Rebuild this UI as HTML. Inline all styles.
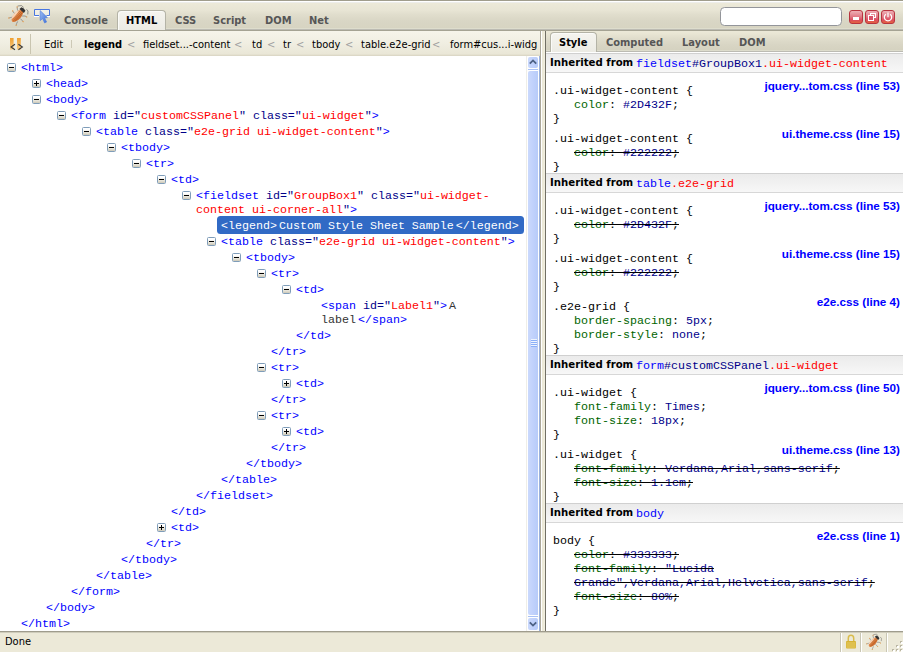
<!DOCTYPE html>
<html>
<head>
<meta charset="utf-8">
<title>Firebug</title>
<style>
html,body{margin:0;padding:0;}
body{width:903px;height:652px;overflow:hidden;position:relative;background:#fff;font-family:"DejaVu Sans Condensed","Liberation Sans",sans-serif;font-size:11px;color:#000;}
.abs{position:absolute;}
/* top toolbar */
#tb1{left:0;top:0;width:903px;height:31px;background:linear-gradient(#a09d8c 0,#a09d8c 1px,#fff 1px,#fff 2px,#ededea 2px,#ededea 3px,#ece9d8 3px,#e8e5d5 10px,#e0ddcc 15px,#d9d6c5 21px,#d7d4c2 28px,#deddcd 28px,#deddcd 29px,#bcbbb3 29px,#bcbbb3 30px,#a5a393 30px,#a5a393 31px);}
.tab{position:absolute;top:14px;height:14px;line-height:14px;font-weight:bold;font-size:11px;color:#565656;white-space:nowrap;}
#tabsel{left:117px;top:10px;width:49px;height:20px;border:1px solid #b4b3a6;border-bottom:none;border-radius:4px 4px 0 0;background:linear-gradient(#f5f4ef,#ecebe4);box-shadow:inset 1px 1px 0 #fbfbf8;box-sizing:border-box;}
.wb{position:absolute;top:10px;width:14px;height:14px;box-sizing:border-box;border:1px solid #b8343f;border-radius:3px;background:linear-gradient(#eeb0b6 0,#e27c88 45%,#dc4c5e 75%,#e3643e 100%);}
.wb i,.wb svg{margin:-1px 0 0 -1px}
/* second toolbar */
#tb2{left:0;top:31px;width:540px;height:25px;background:linear-gradient(#f6f4ea 0,#f0eee2 12px,#eae7d7 23px,#e0dccb 24px,#d8d4c2 25px);}
.crumb{position:absolute;top:38px;height:14px;line-height:14px;white-space:nowrap;font-size:11px;color:#000;}
.lt{position:absolute;top:38px;height:14px;line-height:14px;color:#a0a0a0;font-size:11px;}
/* splitter */
#split{left:540px;top:31px;width:6px;height:600px;background:linear-gradient(90deg,#aca899 0,#aca899 1px,#fff 1px,#fff 2px,#ece9d8 2px,#ece9d8 4px,#f1eede 4px,#f1eede 5px,#716f64 5px);}
/* side panel tab bar */
#tb3{left:546px;top:31px;width:357px;height:22px;background:linear-gradient(#ece9d8 0,#e8e5d3 3px,#dfdccb 8px,#d8d5c4 14px,#d5d2c0 19px,#dddccc 19px,#dddccc 20px,#bcbbb3 20px,#bcbbb3 21px,#a5a393 21px,#a5a393 22px);}
#stabsel{left:550px;top:32px;width:47px;height:20px;border:1px solid #b4b3a6;border-bottom:none;border-radius:4px 4px 0 0;background:linear-gradient(#f5f4ef,#ecebe4);box-shadow:inset 1px 1px 0 #fbfbf8;box-sizing:border-box;}
.stab{position:absolute;top:36px;height:14px;line-height:14px;font-weight:bold;font-size:11px;color:#565656;white-space:nowrap;}
/* status bar */
#status{left:0;top:631px;width:903px;height:21px;background:linear-gradient(#9f9c8d 0,#9f9c8d 1px,#cfccbb 1px,#cfccbb 2px,#ece9d8 2px);}
.sep{position:absolute;top:2px;width:1px;height:19px;background:#c9c6b4;box-shadow:1px 0 0 #fff;}
/* html panel */
#html{left:0;top:56px;width:527px;height:575px;background:#fff;font-family:"Liberation Mono",monospace;font-size:11.67px;}
.n{position:absolute;margin-top:1px;height:14px;line-height:14px;white-space:pre;color:#000088;font-family:"Liberation Mono",monospace;font-size:11.67px;}
.t{color:#0000ff;}
.v{color:#ff0000;}
.x{color:#333;}
.tw{position:absolute;width:9px;height:9px;box-sizing:border-box;border:1px solid #7f9db9;border-radius:1.5px;background:linear-gradient(#fff 20%,#e4e1d5 70%,#cbc7b8);}
.tw:before{content:"";position:absolute;left:1px;top:3px;width:5px;height:1px;background:#000;}
.tw.p:after{content:"";position:absolute;left:3px;top:1px;width:1px;height:5px;background:#000;}
#sel{left:217px;top:216px;width:307px;height:18px;background:#316ac5;border-radius:3.5px;}
/* scrollbar */
#sb{left:527px;top:56px;width:13px;height:575px;background:#fdfdfb;}
.sbb{width:10px;background:linear-gradient(90deg,#cad9fc,#c3d3fc 40%,#b7cbf9);border-radius:2px;box-shadow:0 0 0 1px #fff;}
/* css panel */
#css{left:546px;top:52px;width:357px;height:579px;background:#fff;}
.hd{position:absolute;left:546px;width:357px;height:20px;box-sizing:border-box;border-top:1px solid #d0d0d0;border-bottom:1px solid #d7d7d7;background:linear-gradient(#ebebeb,#f7f7f7);}
.hd b{position:absolute;left:4px;top:2px;height:14px;line-height:14px;font-size:11.3px;font-weight:bold;color:#000;white-space:nowrap;}
.hd span.m{position:absolute;top:3px;height:14px;line-height:14px;font-family:"Liberation Mono",monospace;font-size:11.67px;white-space:pre;color:#000088;}
.c{position:absolute;height:14px;line-height:14px;white-space:pre;font-family:"Liberation Mono",monospace;font-size:11.67px;color:#000;}
.pn{color:#006400;}
.pv{color:#00008b;}
.o{text-decoration:line-through;text-decoration-color:#000;}
.src{position:absolute;right:3px;height:14px;line-height:14px;white-space:nowrap;font-family:"Liberation Sans",sans-serif;font-size:11.7px;font-weight:bold;color:#0000ff;}
</style>
</head>
<body>
<div id="tb1" class="abs"></div>
<div id="tabsel" class="abs"></div>
<div class="tab" style="left:64px">Console</div>
<div class="tab" style="left:126px;color:#000">HTML</div>
<div class="tab" style="left:175px">CSS</div>
<div class="tab" style="left:213px">Script</div>
<div class="tab" style="left:265px">DOM</div>
<div class="tab" style="left:309px">Net</div>

<div id="tb2" class="abs"></div>
<div class="crumb" style="left:44px">Edit</div>
<div class="crumb" style="left:84px;font-weight:bold">legend</div>
<div class="lt" style="left:127px">&lt;</div>
<div class="crumb" style="left:143px">fieldset...-content</div>
<div class="lt" style="left:234px">&lt;</div>
<div class="crumb" style="left:252px">td</div>
<div class="lt" style="left:267px">&lt;</div>
<div class="crumb" style="left:283px">tr</div>
<div class="lt" style="left:296px">&lt;</div>
<div class="crumb" style="left:312px">tbody</div>
<div class="lt" style="left:345px">&lt;</div>
<div class="crumb" style="left:361px">table.e2e-grid</div>
<div class="lt" style="left:432px">&lt;</div>
<div class="crumb" style="left:450px">form#cus...i-widg</div>


<!--ICONS-->
<svg class="abs" style="left:8px;top:4px" width="22" height="22" viewBox="0 0 22 22">
<defs><linearGradient id="bg1" x1="0" y1="0" x2="0" y2="1"><stop offset="0" stop-color="#f7c8a4"/><stop offset="0.45" stop-color="#e68a48"/><stop offset="1" stop-color="#c8662a"/></linearGradient></defs>
<g fill="none" stroke="#8c8c8c" stroke-width="0.9" stroke-linecap="round">
<path d="M10.5 7.5 L9.3 5.2 L9.2 3"/><path d="M7.5 10 L5.5 8.6 L4.8 7"/><path d="M5.5 13 L2.8 13.5 L1 14"/>
<path d="M14.5 12 L17 12 L18.6 12.8"/><path d="M12.8 15 L14 16.6 L15 17.4"/><path d="M9.5 17.8 L8.6 19.6 L8.2 21.2"/>
<path d="M15.4 3.2 L13.5 1.6 L10 2" stroke="#555" stroke-width="0.6"/><path d="M18.8 5.6 L20 7 L19.8 10" stroke="#555" stroke-width="0.6"/>
</g>
<g fill="#efa654"><circle cx="9.2" cy="2.9" r="0.7"/><circle cx="4.7" cy="6.9" r="0.7"/><circle cx="0.9" cy="14" r="0.7"/><circle cx="18.7" cy="12.9" r="0.7"/><circle cx="15.1" cy="17.5" r="0.7"/><circle cx="8.2" cy="21.3" r="0.7"/></g>
<g transform="rotate(-48 10 11)">
<ellipse cx="9" cy="11" rx="7.8" ry="3.7" fill="url(#bg1)"/>
<path d="M2.8 9.8 L14.8 9.8 M2.2 11.2 L15.4 11.2 M3 12.6 L14.8 12.6" stroke="#8f3d10" stroke-width="0.6" opacity="0.6"/>
<ellipse cx="8" cy="8.6" rx="5" ry="0.8" fill="#fde0c8" opacity="0.75"/>
<path d="M15.4 8 L18.2 8.4 Q19.2 11 18.2 13.6 L15.4 14 Z" fill="#333"/>
</g>
</svg>
<svg class="abs" style="left:33px;top:8px" width="19" height="17" viewBox="0 0 19 17">
<defs><linearGradient id="ar" x1="0" y1="0" x2="1" y2="1"><stop offset="0" stop-color="#9dbcf3"/><stop offset="1" stop-color="#3d6fd6"/></linearGradient></defs>
<path d="M1.5 7.5 L1.5 1.5 L16.5 1.5 L16.5 7.5" fill="#fff" fill-opacity="0.45" stroke="none"/>
<path d="M6 7.5 L1.5 7.5 L1.5 1.5 L16.5 1.5 L16.5 7.5 L13.5 7.5" fill="none" stroke="#4876e0" stroke-width="1"/>
<path d="M1 8.5 L6 8.5 M13.5 8.5 L17 8.5" stroke="#fff" stroke-width="1"/>
<path d="M7.2 2.6 L7.2 12.6 L9.6 10.6 L11.6 15 L13.6 14 L11.6 10 L14.4 9.6 Z" fill="url(#ar)" stroke="#4a7be0" stroke-width="0.6"/>
</svg>
<!-- search box -->
<div class="abs" style="left:720px;top:7px;width:122px;height:19px;box-sizing:border-box;border:1px solid #93959a;border-radius:4.5px;background:#fff"></div>
<!-- window buttons -->
<div class="wb" style="left:849px"><i class="abs" style="left:4px;top:7px;width:6px;height:2.5px;background:#fff"></i></div>
<div class="wb" style="left:865px"><i class="abs" style="left:5px;top:3px;width:6px;height:5px;box-sizing:border-box;border:1px solid #fff"></i><i class="abs" style="left:3px;top:5px;width:6px;height:6px;box-sizing:border-box;border:1px solid #fff;background:#d9546a"></i></div>
<div class="wb" style="left:881px"><svg class="abs" style="left:0;top:0" width="14" height="14" viewBox="0 0 14 14"><path d="M4.9 4.2 A3.7 3.7 0 1 0 9.1 4.2" fill="none" stroke="#fff" stroke-width="1.2"/><path d="M7 2.6 L7 7.2" stroke="#fff" stroke-width="1.2"/></svg></div>
<!-- toolbar2 icon -->
<svg class="abs" style="left:9px;top:37px" width="16" height="15" viewBox="0 0 16 15">
<defs><linearGradient id="pz" x1="0" y1="0" x2="0" y2="1"><stop offset="0" stop-color="#f0a030"/><stop offset="1" stop-color="#f8cb86"/></linearGradient></defs>
<rect x="1" y="1" width="3.6" height="11.6" fill="url(#pz)"/><rect x="8" y="1" width="3.8" height="11.6" fill="url(#pz)"/>
<path d="M6 7.2 L2 10 L6 12.8" fill="none" stroke="#3a3a3a" stroke-width="1.1"/><path d="M9.4 7.2 L13.4 10 L9.4 12.8" fill="none" stroke="#3a3a3a" stroke-width="1.1"/>
</svg>
<div class="abs" style="left:30px;top:34px;width:1px;height:20px;background:#c9c5b0"></div>
<div class="abs" style="left:71px;top:40px;width:1px;height:8px;background:#cdc9b6"></div>
<!--/ICONS-->
<div id="split" class="abs"></div>
<div id="tb3" class="abs"></div>
<div id="stabsel" class="abs"></div>
<div class="stab" style="left:559px;color:#000">Style</div>
<div class="stab" style="left:606px">Computed</div>
<div class="stab" style="left:682px">Layout</div>
<div class="stab" style="left:739px">DOM</div>

<div id="html" class="abs"></div>
<!--TREE-->
<i class="tw" style="left:7px;top:63px"></i>
<div class="n" style="left:21px;top:60px"><span class="t">&lt;html</span><span class="t">&gt;</span></div>
<i class="tw p" style="left:32px;top:79px"></i>
<div class="n" style="left:46px;top:76px"><span class="t">&lt;head</span><span class="t">&gt;</span></div>
<i class="tw" style="left:32px;top:95px"></i>
<div class="n" style="left:46px;top:92px"><span class="t">&lt;body</span><span class="t">&gt;</span></div>
<i class="tw" style="left:57px;top:111px"></i>
<div class="n" style="left:71px;top:108px"><span class="t">&lt;form</span> id=&quot;<span class="v">customCSSPanel</span>&quot; class=&quot;<span class="v">ui-widget</span>&quot;<span class="t">&gt;</span></div>
<i class="tw" style="left:82px;top:127px"></i>
<div class="n" style="left:96px;top:124px"><span class="t">&lt;table</span> class=&quot;<span class="v">e2e-grid ui-widget-content</span>&quot;<span class="t">&gt;</span></div>
<i class="tw" style="left:107px;top:143px"></i>
<div class="n" style="left:121px;top:140px"><span class="t">&lt;tbody</span><span class="t">&gt;</span></div>
<i class="tw" style="left:132px;top:159px"></i>
<div class="n" style="left:146px;top:156px"><span class="t">&lt;tr</span><span class="t">&gt;</span></div>
<i class="tw" style="left:157px;top:175px"></i>
<div class="n" style="left:171px;top:172px"><span class="t">&lt;td</span><span class="t">&gt;</span></div>
<i class="tw" style="left:182px;top:191px"></i>
<div class="n" style="left:196px;top:188px"><span class="t">&lt;fieldset</span> id=&quot;<span class="v">GroupBox1</span>&quot; class=&quot;<span class="v">ui-widget-</span></div>
<div class="n" style="left:196px;top:202px"><span class="v">content ui-corner-all</span>&quot;<span class="t">&gt;</span></div>
<div id="sel" class="abs"></div>
<div class="n" style="left:221px;top:218px;color:#fff">&lt;legend&gt;<span style="margin:0 2px">Custom Style Sheet Sample</span>&lt;/legend&gt;</div>
<i class="tw" style="left:207px;top:237px"></i>
<div class="n" style="left:221px;top:234px"><span class="t">&lt;table</span> class=&quot;<span class="v">e2e-grid ui-widget-content</span>&quot;<span class="t">&gt;</span></div>
<i class="tw" style="left:232px;top:253px"></i>
<div class="n" style="left:246px;top:250px"><span class="t">&lt;tbody</span><span class="t">&gt;</span></div>
<i class="tw" style="left:257px;top:269px"></i>
<div class="n" style="left:271px;top:266px"><span class="t">&lt;tr</span><span class="t">&gt;</span></div>
<i class="tw" style="left:282px;top:285px"></i>
<div class="n" style="left:296px;top:282px"><span class="t">&lt;td</span><span class="t">&gt;</span></div>
<div class="n" style="left:321px;top:298px"><span class="t">&lt;span</span> id=&quot;<span class="v">Label1</span>&quot;<span class="t">&gt;</span><span class="x" style="margin-left:2px">A</span></div>
<div class="n" style="left:321px;top:312px"><span class="x" style="margin-right:2px">label</span><span class="t">&lt;/span&gt;</span></div>
<div class="n" style="left:296px;top:328px"><span class="t">&lt;/td</span><span class="t">&gt;</span></div>
<div class="n" style="left:271px;top:344px"><span class="t">&lt;/tr</span><span class="t">&gt;</span></div>
<i class="tw" style="left:257px;top:363px"></i>
<div class="n" style="left:271px;top:360px"><span class="t">&lt;tr</span><span class="t">&gt;</span></div>
<i class="tw p" style="left:282px;top:379px"></i>
<div class="n" style="left:296px;top:376px"><span class="t">&lt;td</span><span class="t">&gt;</span></div>
<div class="n" style="left:271px;top:392px"><span class="t">&lt;/tr</span><span class="t">&gt;</span></div>
<i class="tw" style="left:257px;top:411px"></i>
<div class="n" style="left:271px;top:408px"><span class="t">&lt;tr</span><span class="t">&gt;</span></div>
<i class="tw p" style="left:282px;top:427px"></i>
<div class="n" style="left:296px;top:424px"><span class="t">&lt;td</span><span class="t">&gt;</span></div>
<div class="n" style="left:271px;top:440px"><span class="t">&lt;/tr</span><span class="t">&gt;</span></div>
<div class="n" style="left:246px;top:456px"><span class="t">&lt;/tbody</span><span class="t">&gt;</span></div>
<div class="n" style="left:221px;top:472px"><span class="t">&lt;/table</span><span class="t">&gt;</span></div>
<div class="n" style="left:196px;top:488px"><span class="t">&lt;/fieldset</span><span class="t">&gt;</span></div>
<div class="n" style="left:171px;top:504px"><span class="t">&lt;/td</span><span class="t">&gt;</span></div>
<i class="tw p" style="left:157px;top:523px"></i>
<div class="n" style="left:171px;top:520px"><span class="t">&lt;td</span><span class="t">&gt;</span></div>
<div class="n" style="left:146px;top:536px"><span class="t">&lt;/tr</span><span class="t">&gt;</span></div>
<div class="n" style="left:121px;top:552px"><span class="t">&lt;/tbody</span><span class="t">&gt;</span></div>
<div class="n" style="left:96px;top:568px"><span class="t">&lt;/table</span><span class="t">&gt;</span></div>
<div class="n" style="left:71px;top:584px"><span class="t">&lt;/form</span><span class="t">&gt;</span></div>
<div class="n" style="left:46px;top:600px"><span class="t">&lt;/body</span><span class="t">&gt;</span></div>
<div class="n" style="left:21px;top:616px"><span class="t">&lt;/html</span><span class="t">&gt;</span></div>
<!--/TREE-->
<div class="abs" style="left:526px;top:56px;width:1px;height:575px;background:#efeee8"></div>
<div id="sb" class="abs">
<div class="abs sbb" style="left:1px;top:1px;height:11px"><svg class="abs" style="left:1px;top:2px" width="8" height="6" viewBox="0 0 8 6"><path d="M0.8 4.6 L4 1.4 L7.2 4.6" fill="none" stroke="#4d6185" stroke-width="1.8"/></svg></div>
<div class="abs" style="left:1px;top:13px;width:10px;height:1px;background:#a9c1f5"></div>
<div class="abs sbb" style="left:1px;top:15px;height:544px;border-radius:2px 0 0 2px"></div>
<div class="abs" style="left:4px;top:283px;width:6px;height:1px;background:#eef4fe;box-shadow:0 1px 0 #8cb0f8,0 2px 0 #eef4fe,0 3px 0 #8cb0f8,0 4px 0 #eef4fe,0 5px 0 #8cb0f8,0 6px 0 #eef4fe,0 7px 0 #8cb0f8"></div>
<div class="abs" style="left:1px;top:560px;width:10px;height:1px;background:#a9c1f5"></div>
<div class="abs sbb" style="left:1px;top:562px;height:12px"><svg class="abs" style="left:1px;top:3px" width="8" height="6" viewBox="0 0 8 6"><path d="M0.8 1.4 L4 4.6 L7.2 1.4" fill="none" stroke="#4d6185" stroke-width="1.8"/></svg></div>
<div class="abs" style="left:12px;top:0;width:1px;height:575px;background:#9bb2de"></div>
</div>
<div id="css" class="abs"></div>
<!--CSS-->
<div class="hd" style="top:53px"><b>Inherited from</b><span class="m" style="left:90px"><span class="t">fieldset</span>#GroupBox1<span class="v">.ui-widget-content</span></span></div>
<div class="src" style="top:79px">jquery...tom.css (line 53)</div>
<div class="c" style="left:553px;top:84px">.ui-widget-content {</div>
<div class="c" style="left:574px;top:98px"><span class="pn">color</span>: <span class="pv">#2D432F</span>;</div>
<div class="c" style="left:553px;top:112px">}</div>
<div class="src" style="top:127px">ui.theme.css (line 15)</div>
<div class="c" style="left:553px;top:132px">.ui-widget-content {</div>
<div class="c o" style="left:574px;top:146px"><span class="pn">color</span>: <span class="pv">#222222</span>;</div>
<div class="c" style="left:553px;top:160px">}</div>
<div class="hd" style="top:173px"><b>Inherited from</b><span class="m" style="left:90px"><span class="t">table</span><span class="v">.e2e-grid</span></span></div>
<div class="src" style="top:199px">jquery...tom.css (line 53)</div>
<div class="c" style="left:553px;top:204px">.ui-widget-content {</div>
<div class="c o" style="left:574px;top:218px"><span class="pn">color</span>: <span class="pv">#2D432F</span>;</div>
<div class="c" style="left:553px;top:232px">}</div>
<div class="src" style="top:247px">ui.theme.css (line 15)</div>
<div class="c" style="left:553px;top:252px">.ui-widget-content {</div>
<div class="c o" style="left:574px;top:266px"><span class="pn">color</span>: <span class="pv">#222222</span>;</div>
<div class="c" style="left:553px;top:280px">}</div>
<div class="src" style="top:295px">e2e.css (line 4)</div>
<div class="c" style="left:553px;top:300px">.e2e-grid {</div>
<div class="c" style="left:574px;top:314px"><span class="pn">border-spacing</span>: <span class="pv">5px</span>;</div>
<div class="c" style="left:574px;top:328px"><span class="pn">border-style</span>: <span class="pv">none</span>;</div>
<div class="c" style="left:553px;top:342px">}</div>
<div class="hd" style="top:355px"><b>Inherited from</b><span class="m" style="left:90px"><span class="t">form</span>#customCSSPanel<span class="v">.ui-widget</span></span></div>
<div class="src" style="top:381px">jquery...tom.css (line 50)</div>
<div class="c" style="left:553px;top:386px">.ui-widget {</div>
<div class="c" style="left:574px;top:400px"><span class="pn">font-family</span>: <span class="pv">Times</span>;</div>
<div class="c" style="left:574px;top:414px"><span class="pn">font-size</span>: <span class="pv">18px</span>;</div>
<div class="c" style="left:553px;top:428px">}</div>
<div class="src" style="top:443px">ui.theme.css (line 13)</div>
<div class="c" style="left:553px;top:448px">.ui-widget {</div>
<div class="c o" style="left:574px;top:462px"><span class="pn">font-family</span>: <span class="pv">Verdana,Arial,sans-serif</span>;</div>
<div class="c o" style="left:574px;top:476px"><span class="pn">font-size</span>: <span class="pv">1.1em</span>;</div>
<div class="c" style="left:553px;top:490px">}</div>
<div class="hd" style="top:503px"><b>Inherited from</b><span class="m" style="left:90px"><span class="t">body</span></span></div>
<div class="src" style="top:529px">e2e.css (line 1)</div>
<div class="c" style="left:553px;top:534px">body {</div>
<div class="c o" style="left:574px;top:548px"><span class="pn">color</span>: <span class="pv">#333333</span>;</div>
<div class="c o" style="left:574px;top:562px"><span class="pn">font-family</span>: <span class="pv">&quot;Lucida</span></div>
<div class="c o" style="left:574px;top:576px"><span class="pv">Grande&quot;,Verdana,Arial,Helvetica,sans-serif</span>;</div>
<div class="c o" style="left:574px;top:590px"><span class="pn">font-size</span>: <span class="pv">80%</span>;</div>
<div class="c" style="left:553px;top:604px">}</div>
<!--/CSS-->

<div id="status" class="abs"><span class="abs" style="left:5px;top:4px;line-height:14px">Done</span>
<i class="sep" style="left:840px"></i><i class="sep" style="left:860px"></i><i class="sep" style="left:886px"></i>
<svg class="abs" style="left:845px;top:3px" width="12" height="16" viewBox="0 0 12 16">
<path d="M3.3 7.5 L3.3 4.2 A2.7 2.9 0 0 1 8.7 4.2 L8.7 7.5" fill="none" stroke="#d9bc4c" stroke-width="1.5"/>
<rect x="1" y="7" width="10" height="7.6" rx="1" fill="#d6b233"/>
<path d="M1.5 9 L10.5 9 M1.5 11 L10.5 11 M1.5 13 L10.5 13" stroke="#ecd676" stroke-width="0.8"/>
</svg>
<svg class="abs" style="left:890px;top:9px" width="14" height="14" viewBox="0 0 14 14"><g fill="#b9b5a3"><rect x="10" y="1" width="2" height="2"/><rect x="6" y="5" width="2" height="2"/><rect x="10" y="5" width="2" height="2"/><rect x="2" y="9" width="2" height="2"/><rect x="6" y="9" width="2" height="2"/><rect x="10" y="9" width="2" height="2"/></g><g fill="#fff"><rect x="11" y="2" width="2" height="2"/><rect x="7" y="6" width="2" height="2"/><rect x="11" y="6" width="2" height="2"/><rect x="3" y="10" width="2" height="2"/><rect x="7" y="10" width="2" height="2"/><rect x="11" y="10" width="2" height="2"/></g></svg>
</div>
<svg class="abs" style="left:866px;top:633px" width="17" height="17" viewBox="0 0 22 22">
<defs><linearGradient id="bg2" x1="0" y1="0" x2="0" y2="1"><stop offset="0" stop-color="#f7c8a4"/><stop offset="0.45" stop-color="#e68a48"/><stop offset="1" stop-color="#c8662a"/></linearGradient></defs>
<g fill="none" stroke="#8c8c8c" stroke-width="0.9" stroke-linecap="round">
<path d="M10.5 7.5 L9.3 5.2 L9.2 3"/><path d="M7.5 10 L5.5 8.6 L4.8 7"/><path d="M5.5 13 L2.8 13.5 L1 14"/>
<path d="M14.5 12 L17 12 L18.6 12.8"/><path d="M12.8 15 L14 16.6 L15 17.4"/><path d="M9.5 17.8 L8.6 19.6 L8.2 21.2"/>
<path d="M15.4 3.2 L13.5 1.6 L10 2" stroke="#555" stroke-width="0.6"/><path d="M18.8 5.6 L20 7 L19.8 10" stroke="#555" stroke-width="0.6"/>
</g>
<g fill="#efa654"><circle cx="9.2" cy="2.9" r="0.7"/><circle cx="4.7" cy="6.9" r="0.7"/><circle cx="0.9" cy="14" r="0.7"/><circle cx="18.7" cy="12.9" r="0.7"/><circle cx="15.1" cy="17.5" r="0.7"/><circle cx="8.2" cy="21.3" r="0.7"/></g>
<g transform="rotate(-48 10 11)">
<ellipse cx="9" cy="11" rx="7.8" ry="3.7" fill="url(#bg2)"/>
<path d="M2.8 9.8 L14.8 9.8 M2.2 11.2 L15.4 11.2 M3 12.6 L14.8 12.6" stroke="#8f3d10" stroke-width="0.6" opacity="0.6"/>
<ellipse cx="8" cy="8.6" rx="5" ry="0.8" fill="#fde0c8" opacity="0.75"/>
<path d="M15.4 8 L18.2 8.4 Q19.2 11 18.2 13.6 L15.4 14 Z" fill="#333"/>
</g>
</svg>
</body>
</html>
